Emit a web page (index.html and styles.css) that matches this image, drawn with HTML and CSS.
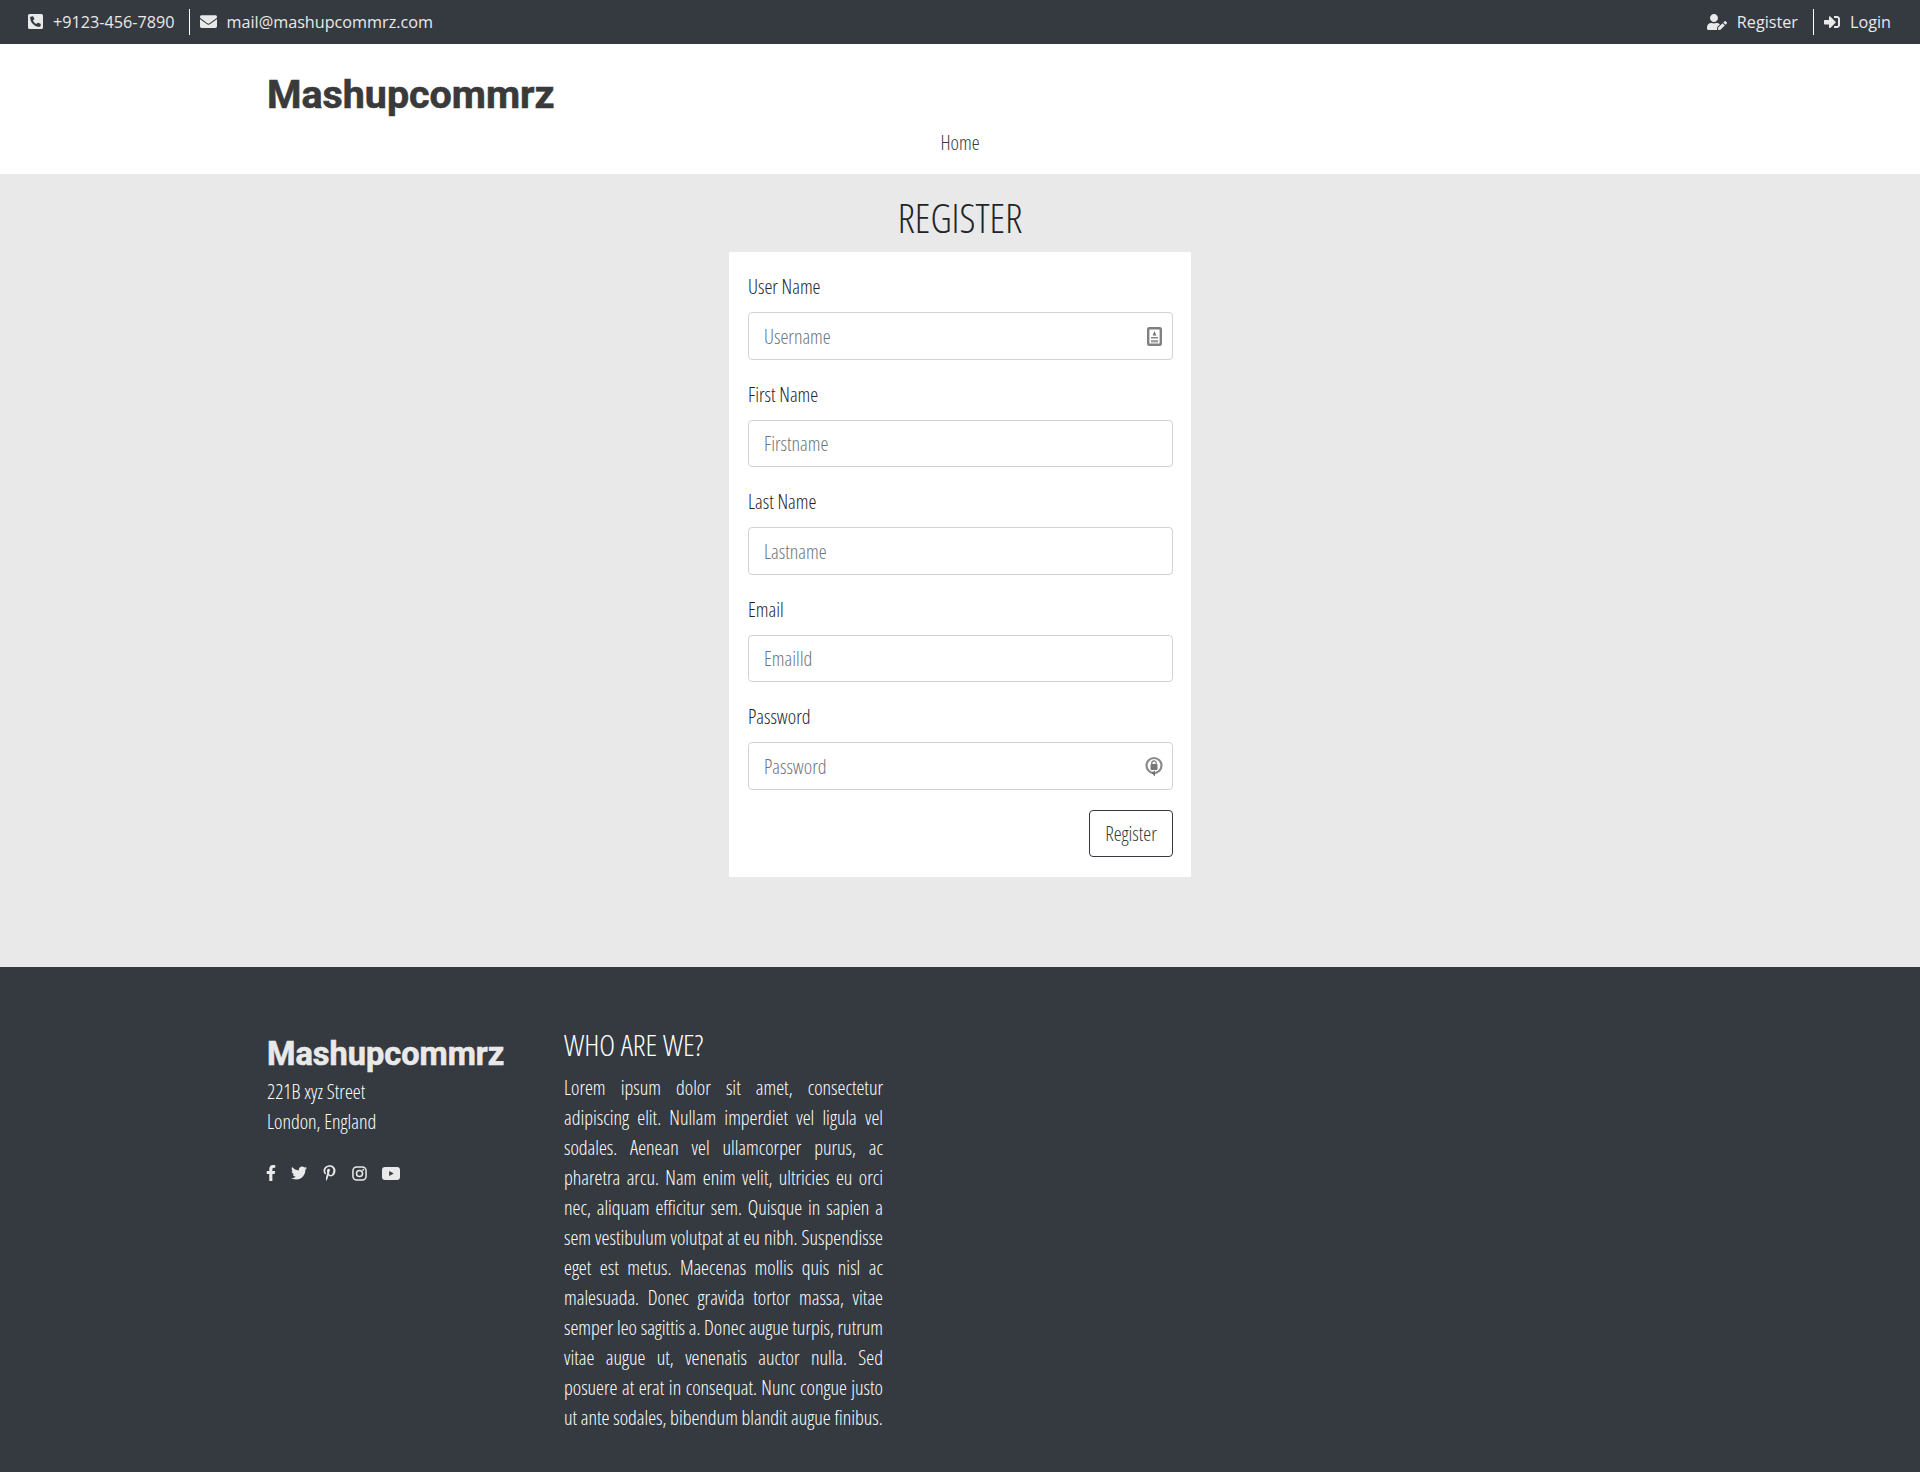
FILE: index.html
```html
<!DOCTYPE html>
<html lang="en">
<head>
<meta charset="utf-8">
<title>Register</title>
<link rel="stylesheet" href="styles.css">
</head>
<body>
<div class="topbar">
  <div class="tb-group">
    <a class="tb-item">
      <svg class="ic ic-phone" viewBox="0 32 448 448"><path d="M400 32H48A48 48 0 0 0 0 80v352a48 48 0 0 0 48 48h352a48 48 0 0 0 48-48V80a48 48 0 0 0-48-48zm-16.39 307.37l-15 65A15 15 0 0 1 354 416C194 416 64 286.29 64 126a15.7 15.7 0 0 1 11.63-14.61l65-15A18.23 18.23 0 0 1 144 96a16.27 16.27 0 0 1 13.79 9.09l30 70A17.9 17.9 0 0 1 189 181a17 17 0 0 1-5.5 11.61l-37.89 31a231.91 231.91 0 0 0 110.78 110.78l31-37.89A17 17 0 0 1 299 291a17.85 17.85 0 0 1 5.91 1.21l70 30A16.25 16.25 0 0 1 384 336a17.41 17.41 0 0 1-.39 3.37z"/></svg>
      <span>+9123-456-7890</span>
    </a>
    <i class="tb-sep"></i>
    <a class="tb-item">
      <svg class="ic ic-mail" viewBox="0 64 512 384"><path d="M502.3 190.8c3.9-3.1 9.7-.2 9.7 4.7V400c0 26.5-21.5 48-48 48H48c-26.5 0-48-21.5-48-48V195.6c0-5 5.7-7.8 9.7-4.7 22.4 17.4 52.1 39.5 154.1 113.6 21.1 15.4 56.7 47.8 92.2 47.6 35.7.3 72-32.8 92.3-47.6 102-74.1 131.6-96.3 154-113.7zM256 320c23.2.4 56.6-29.2 73.4-41.4 132.7-96.3 142.8-104.7 173.4-128.7 5.8-4.5 9.2-11.5 9.2-18.9v-19c0-26.5-21.5-48-48-48H48C21.5 64 0 85.5 0 112v19c0 7.4 3.4 14.3 9.2 18.9 30.6 23.9 40.7 32.4 173.4 128.7 16.8 12.2 50.2 41.8 73.4 41.4z"/></svg>
      <span>mail@mashupcommrz.com</span>
    </a>
  </div>
  <div class="tb-group">
    <a class="tb-item">
      <svg class="ic ic-user" viewBox="0 0 640 512"><path d="M224 256c70.7 0 128-57.3 128-128S294.7 0 224 0 96 57.3 96 128s57.3 128 128 128zm89.6 32h-16.7c-22.2 10.2-46.9 16-72.9 16s-50.6-5.8-72.9-16h-16.7C60.2 288 0 348.2 0 422.4V464c0 26.5 21.5 48 48 48h274.9c-2.4-6.8-3.4-14-2.6-21.3l6.8-60.9 1.2-11.1 7.9-7.9 77.3-77.3c-24.5-27.7-60-45.5-99.9-45.5zm45.3 145.3l-6.8 61c-1.1 10.2 7.5 18.8 17.6 17.6l60.9-6.8 137.9-137.9-71.7-71.7-137.9 137.8zM633 268.9L595.1 231c-9.3-9.3-24.5-9.3-33.8 0l-37.8 37.8-4.1 4.1 71.8 71.7 41.8-41.8c9.3-9.4 9.3-24.5 0-33.9z"/></svg>
      <span>Register</span>
    </a>
    <i class="tb-sep tb-sep-right"></i>
    <a class="tb-item">
      <svg class="ic ic-login" viewBox="0 64 512 384"><path d="M416 448h-84c-6.6 0-12-5.4-12-12v-40c0-6.6 5.4-12 12-12h84c17.7 0 32-14.3 32-32V160c0-17.7-14.3-32-32-32h-84c-6.6 0-12-5.4-12-12V76c0-6.6 5.4-12 12-12h84c53 0 96 43 96 96v192c0 53-43 96-96 96zm-47-201L201 79c-15-15-41-4.5-41 17v96H24c-13.3 0-24 10.7-24 24v96c0 13.3 10.7 24 24 24h136v96c0 21.5 26 32 41 17l168-168c9.3-9.4 9.3-24.6 0-34z"/></svg>
      <span>Login</span>
    </a>
  </div>
</div>

<header class="site-header">
  <div class="logo">Mashupcommrz</div>
  <nav class="nav"><a>Home</a></nav>
</header>

<main class="page">
  <h1 class="page-title">REGISTER</h1>
  <form class="card">
    <div class="group">
      <label>User Name</label>
      <div class="field">
        <input type="text" placeholder="Username">
        <svg class="field-ic field-ic-user" viewBox="0 0 15 19"><rect x="1.200" y="1.200" width="12.600" height="16.600" rx="1" fill="#fff" stroke="#808080" stroke-width="2.400"/><path d="M7.500 4l1.800 4.500H5.700z" fill="#707070"/><rect x="4" y="10" width="7" height="1.500" fill="#888"/><rect x="4" y="13" width="7" height="2.500" fill="#a0a0a0"/></svg>
      </div>
    </div>
    <div class="group">
      <label>First Name</label>
      <div class="field"><input type="text" placeholder="Firstname"></div>
    </div>
    <div class="group">
      <label>Last Name</label>
      <div class="field"><input type="text" placeholder="Lastname"></div>
    </div>
    <div class="group">
      <label>Email</label>
      <div class="field"><input type="text" placeholder="EmailId"></div>
    </div>
    <div class="group">
      <label>Password</label>
      <div class="field">
        <input type="text" placeholder="Password">
        <svg class="field-ic field-ic-lock" viewBox="0 0 18 21"><circle cx="9" cy="9.500" r="7.500" fill="none" stroke="#8a8a8a" stroke-width="2.200"/><rect x="5.500" y="8" width="7" height="6" rx="1" fill="#777"/><path d="M6.800 8.500V7a2.200 2.200 0 0 1 4.400 0v1.500" fill="none" stroke="#777" stroke-width="1.200"/><path d="M6.500 17l3.500-2.500v6z" fill="#707070"/></svg>
      </div>
    </div>
    <div class="actions"><button type="button" class="btn">Register</button></div>
  </form>
</main>

<footer class="footer">
  <div class="f-brand">
    <div class="logo logo-small">Mashupcommrz</div>
    <p class="addr">221B xyz Street<br>London, England</p>
    <div class="social">
      <svg class="s s-f" viewBox="0 0 320 512"><path d="M279.14 288l14.22-92.66h-88.91v-60.13c0-25.35 12.42-50.06 52.24-50.06h40.42V6.26S260.43 0 225.36 0c-73.22 0-121.08 44.38-121.08 124.72v70.62H22.89V288h81.39v224h100.17V288z"/></svg>
      <svg class="s s-t" viewBox="0 0 512 512"><path d="M459.37 151.716c.325 4.548.325 9.097.325 13.645 0 138.72-105.583 298.558-298.558 298.558-59.452 0-114.68-17.219-161.137-47.106 8.447.974 16.568 1.299 25.34 1.299 49.055 0 94.213-16.568 130.274-44.832-46.132-.975-84.792-31.188-98.112-72.772 6.498.974 12.995 1.624 19.818 1.624 9.421 0 18.843-1.3 27.614-3.573-48.081-9.747-84.143-51.98-84.143-102.985v-1.299c13.969 7.797 30.214 12.67 47.431 13.319-28.264-18.843-46.781-51.005-46.781-87.391 0-19.492 5.197-37.36 14.294-52.954 51.655 63.675 129.3 105.258 216.365 109.807-1.624-7.797-2.599-15.918-2.599-24.04 0-57.828 46.782-104.934 104.934-104.934 30.213 0 57.502 12.67 76.67 33.137 23.715-4.548 46.456-13.32 66.599-25.34-7.798 24.366-24.366 44.833-46.132 57.827 21.117-2.273 41.584-8.122 60.426-16.243-14.292 20.791-32.161 39.308-52.628 54.253z"/></svg>
      <svg class="s s-p" viewBox="0 0 384 512"><path d="M204 6.500C101.400 6.500 0 74.900 0 185.600 0 256 39.600 296 63.600 296c9.900 0 15.600-27.600 15.600-35.400 0-9.300-23.700-29.100-23.700-67.800 0-80.400 61.200-137.400 140.400-137.400 68.100 0 118.500 38.700 118.500 109.800 0 53.100-21.300 152.700-90.300 152.700-24.900 0-46.200-18-46.200-43.800 0-37.800 26.400-74.400 26.400-113.400 0-66.200-93.900-54.200-93.900 25.800 0 16.800 2.100 35.400 9.600 50.700-13.800 59.400-42 147.900-42 209.100 0 18.900 2.700 37.500 4.500 56.400 3.400 3.800 1.700 3.400 6.900 1.500 50.400-69 48.600-82.500 71.400-172.800 12.300 23.400 44.100 36 69.300 36 106.200 0 153.900-103.500 153.900-196.800C384 71.300 298.200 6.500 204 6.500z"/></svg>
      <svg class="s s-i" viewBox="0 0 16 16"><rect x="1" y="1" width="14" height="14" rx="4" fill="none" stroke="currentColor" stroke-width="1.600"/><circle cx="8" cy="8" r="3.200" fill="none" stroke="currentColor" stroke-width="1.600"/><circle cx="12" cy="4" r="1"/></svg>
      <svg class="s s-y" viewBox="0 0 18 13"><path fill-rule="evenodd" d="M3 0h12a3 3 0 0 1 3 3v7a3 3 0 0 1-3 3H3a3 3 0 0 1-3-3V3a3 3 0 0 1 3-3zM7.200 4v5l4.500-2.500z"/></svg>
    </div>
  </div>
  <div class="f-about">
    <h2>WHO ARE WE?</h2>
    <p>Lorem ipsum dolor sit amet, consectetur adipiscing elit. Nullam imperdiet vel ligula vel sodales. Aenean vel ullamcorper purus, ac pharetra arcu. Nam enim velit, ultricies eu orci nec, aliquam efficitur sem. Quisque in sapien a sem vestibulum volutpat at eu nibh. Suspendisse eget est metus. Maecenas mollis quis nisl ac malesuada. Donec gravida tortor massa, vitae semper leo sagittis a. Donec augue turpis, rutrum vitae augue ut, venenatis auctor nulla. Sed posuere at erat in consequat. Nunc congue justo ut ante sodales, bibendum blandit augue finibus.</p>
  </div>
</footer>
</body>
</html>
```
FILE: styles.css
```css
* { box-sizing: border-box; }
html, body { margin: 0; padding: 0; }
body {
  font-family: "Open Sans", "Liberation Sans", sans-serif;
  font-stretch: condensed;
  font-weight: 300;
  font-size: 20px;
  line-height: 1.5;
  color: #212529;
  background: #fff;
}
.topbar {
  height: 44px;
  background: #343a40;
  color: #e9e9e9;
  display: flex;
  justify-content: space-between;
  align-items: center;
  padding: 0 29px 0 28px;
  font-size: 16.2px;
  font-weight: 400;
  font-stretch: normal;
}
.tb-group { display: flex; align-items: center; }
.tb-item { display: flex; align-items: center; gap: 10px; }
.tb-sep { display: block; width: 1px; height: 26px; background: #fff; margin: 0 10px 0 14px; }
.tb-sep-right { margin-left: 15px; }
.ic { fill: #e9e9e9; display: block; }
.ic-phone { width: 15px; height: 15px; }
.ic-mail { width: 17px; height: 13px; }
.ic-user { width: 20px; height: 16px; }
.ic-login { width: 16px; height: 12px; }

.site-header { height: 130px; background: #fff; }
.logo {
  font-family: "Roboto", sans-serif;
  font-stretch: normal;
  font-weight: 700;
  font-size: 39.4px;
  line-height: 50px;
  color: #3a3a3a;
  padding: 26px 0 0 267px;
  -webkit-text-stroke: 0.6px currentColor;
}
.nav { text-align: center; color: #343a40; font-size: 20px; line-height: 26px; margin-top: 10px; font-weight: 300; }

.page { height: 793px; background: #e9e9e9; display: flex; flex-direction: column; align-items: center; }
.page-title { margin: 12px 0 0; height: 66px; font-size: 40px; font-weight: 300; line-height: 64px; color: #212529; }
.card { width: 462px; height: 625px; background: #fff; padding: 19px 18px 19px 19px; }
.group { margin-bottom: 19px; }
.group label { display: block; height: 30px; margin-bottom: 11px; font-size: 20px; line-height: 32px; color: #212529; font-weight: 300; }
.field { position: relative; }
.field input {
  display: block;
  width: 100%;
  height: 47.500px;
  border: 1px solid #ced4da;
  border-radius: 4px;
  padding: 1px 15px 0;
  font: inherit;
  font-size: 20px;
  color: #495057;
  background: #fff;
}
.field input::placeholder { color: #6c757d; opacity: 1; }
.field-ic { position: absolute; }
.field-ic-user { right: 11px; top: 15px; width: 15px; height: 19px; }
.field-ic-lock { right: 10px; top: 14px; width: 18px; height: 21px; }
.actions { display: flex; justify-content: flex-end; margin-top: 20.500px; }
.btn {
  width: 84px;
  height: 47px;
  border: 1px solid #343a40;
  border-radius: 4px;
  background: #fff;
  color: #343a40;
  font: inherit;
  padding: 1px 0 0;
}

.footer { height: 505px; background: #343a40; color: #fff; display: flex; padding: 0 0 0 267px; }
.f-brand { width: 297px; }
.logo-small { font-size: 32.5px; line-height: 42px; color: #e9e9e9; padding: 66px 0 0 0; }
.addr { margin: 2px 0 0; font-size: 20px; line-height: 30px; }
.social { display: flex; align-items: center; margin-top: 28px; color: #e9e9e9; margin-left: -1px; }
.s { fill: currentColor; display: block; height: 16px; }
.s-f { width: 10px; }
.s-t { width: 16px; margin-left: 15px; }
.s-p { width: 13px; margin-left: 16px; }
.s-i { width: 15px; height: 15px; margin-left: 16px; }
.s-y { width: 18px; height: 13px; margin-left: 15px; }
.f-about { width: 319px; }
.f-about h2 { margin: 56px 0 0; font-size: 30px; font-weight: 300; line-height: 44px; }
.f-about p { margin: 6px 0 0; font-size: 20px; line-height: 30px; text-align: justify; }
```
